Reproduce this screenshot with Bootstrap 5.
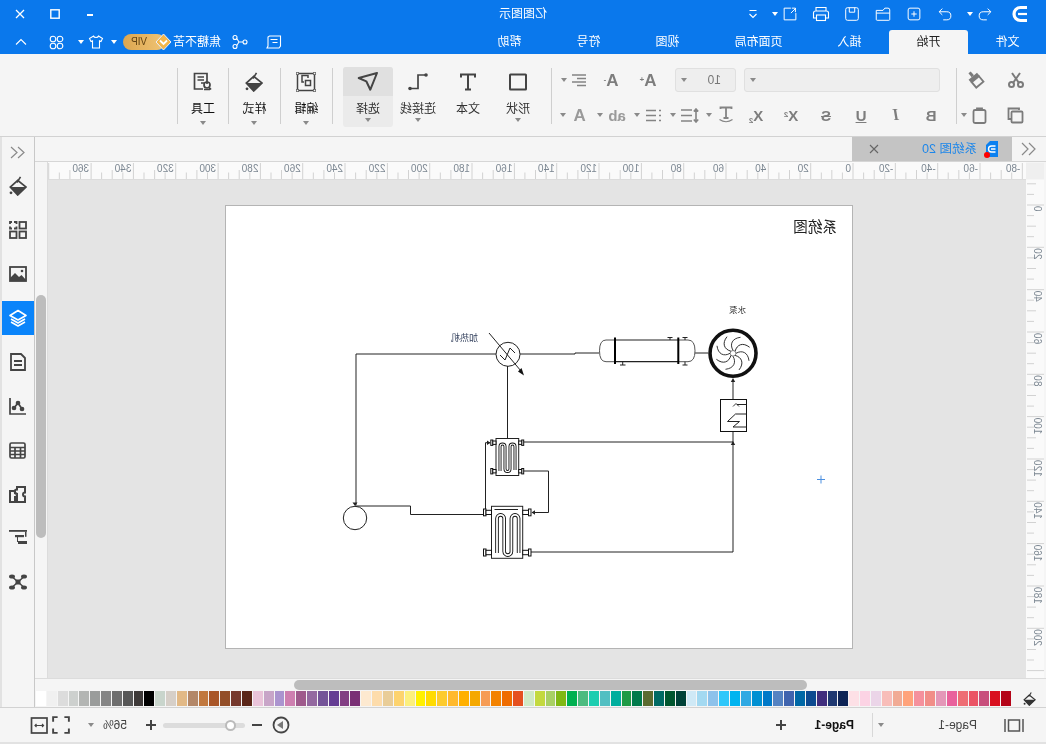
<!DOCTYPE html>
<html lang="zh">
<head>
<meta charset="UTF-8">
<title>亿图图示</title>
<link href="https://cdn.jsdelivr.net/npm/bootstrap@5.3.3/dist/css/bootstrap.min.css" rel="stylesheet">
<style>
html, body { width: 1046px; height: 744px; margin: 0; overflow: hidden; background: #f5f5f5; }
body { font-family: "Liberation Sans", "Noto Sans CJK SC", sans-serif; font-size: 12px; color: #333; }
/* the whole window is shown mirrored */
.app-flip { width: 1046px; height: 744px; transform: scaleX(-1); }
svg { display: block; }
.ln { fill: none; stroke: currentColor; stroke-width: 1.1; }
.cell { display: flex; align-items: center; justify-content: center; flex: none; }
.cr { flex: none; width: 0; height: 0; border-left: 3.5px solid transparent; border-right: 3.5px solid transparent; border-top: 4px solid #8a8a8a; }
.crw { width: 8px; display: flex; justify-content: center; flex: none; }

.m1 { margin-left: 1px; } .m2 { margin-left: 2px; } .m3 { margin-left: 3px; } .m4 { margin-left: 4px; } .m5 { margin-left: 5px; }
.m8 { margin-left: 8px; } .m9 { margin-left: 9px; } .m10 { margin-left: 10px; } .m12 { margin-left: 12px; } .m16 { margin-left: 16px; } .m17 { margin-left: 17px; } .m18 { margin-left: 18px; }
.m26 { margin-left: 26px; } .m27 { margin-left: 27px; } .m53 { margin-left: 53px; }

/* title + tabs */
.top-blue { background: #0a78ec; color: #fff; flex: none; }
.title-row { height: 27px; display: grid; grid-template-columns: 1fr auto 1fr; align-items: center; }
.title-row .cell { height: 27px; }
.w31 { width: 31px; } .w25 { width: 25px; } .w35 { width: 35px; } .w33 { width: 33px; } .w20 { width: 20px; } .w40 { width: 40px; } .w32 { width: 32px; } .w34 { width: 34px; } .w30 { width: 30px; } .w24 { width: 24px; }
.tb-caret { width: 9px; margin-left: -5px; margin-right: 5px; display: flex; justify-content: center; }
.cr.wh { border-top-color: #fff; }
.logo-cell { margin-left: 10px; margin-right: 4px; }
.win-btns { padding-right: 3px; }
.tab-row { height: 27px; padding-top: 3px; }
.rb-tab { padding: 0 27.5px; line-height: 24px; height: 24px; color: #fff; flex: none; }
.rb-tab.on { background: #f5f5f5; color: #222; border-radius: 3px 3px 0 0; }
.rb-tab:first-child { margin-left: -1px; }
.tab-tools { padding-right: 11px; }
.vip-pill { position: relative; width: 42px; height: 16px; margin-left: 8px; border-radius: 8px; background: linear-gradient(90deg, #f0c474, #dca650); color: #644413; font-size: 10px; line-height: 16px; text-align: right; padding-right: 8px; flex: none; }
.vip-gem { position: absolute; left: -7px; top: -1px; }
.user-name { width: 48px; flex: none; white-space: nowrap; }

/* ribbon */
.ribbon { height: 83px; background: #f5f5f5; border-bottom: 1px solid #d2d2d2; flex: none; }
.rsep { width: 1px; height: 56px; margin-top: 14px; background: #cfcfcf; flex: none; }
.clip-grp { width: 89px; padding: 14px 0 0 10px; color: #7b7b7b; flex: none; }
.font-grp { width: 404px; padding-top: 14px; color: #848484; flex: none; }
.rrow { height: 24px; display: flex; align-items: center; }
.rrow + .rrow { margin-top: 11px; }
.rrow .cell { height: 24px; }
.font-row2 { padding-left: 7.5px; }
.sel-box { height: 24px; background: #eee; border: 1px solid #e0e0e0; border-radius: 3px; display: flex; align-items: center; justify-content: flex-end; padding-right: 5px; flex: none; }
.sel-name { width: 196px; margin-left: 16px; }
.sel-size { width: 61px; margin-left: 8px; justify-content: space-between; padding-left: 14px; color: #777; }
.gl { font-weight: 700; font-size: 15px; line-height: 1; color: #7d7d7d; }
.gl-big { font-size: 17px; }
.gl-serif { font-family: "Liberation Serif", serif; font-style: italic; font-size: 16px; }
.gl-dim { color: #9a9a9a; }
.gl sup, .gl sub { font-size: 8px; }
.caret-tuck { margin-left: -3px; }
.caret-back { margin-left: -4px; }
.big-btn { width: 50px; height: 60px; margin-top: 13px; border-radius: 3px; display: flex; flex-direction: column; align-items: center; flex: none; color: #444; overflow: hidden; }
.big-btn.w51 { width: 51px; }
.big-ic { height: 29px; width: 100%; display: flex; align-items: center; justify-content: center; flex: none; }
.big-lb { line-height: 18px; margin-top: 4px; height: 18px; color: #333; white-space: nowrap; flex: none; }
.big-btn.on { background: #ebebeb; }
.big-btn.on .big-ic { background: #e0e0e0; }
.big-btn.tool .big-lb { height: 21px; color: #111; }

/* main */
.main-row { height: 570px; flex: none; }
.work { width: 1011px; flex: none; }
.tab-strip { height: 25px; background: #f5f5f5; border-bottom: 1px solid #d6d6d6; padding-left: 10px; flex: none; }
.doc-tab { width: 160px; height: 24px; background: #c4c4c4; margin-left: 8px; position: relative; flex: none; }
.doc-tab .nm { color: #1c86ea; font-size: 12.5px; margin-left: 9px; white-space: nowrap; }
.doc-close { margin-left: auto; margin-right: 17px; color: #666; }
.doc-dot { position: absolute; left: 22px; top: 15px; width: 6px; height: 6px; border-radius: 50%; background: #f00; }
.mid-row { height: 516px; flex: none; }
.mid-col { width: 998px; flex: none; }
.ruler-row { height: 18px; flex: none; }
.ruler-cnr { width: 20px; padding: 1px 0 1px 2px; flex: none; }
.ruler-cnr div { height: 16px; background: #efefef; }
.hruler { width: 978px; height: 18px; padding-top: 1px; background: #fafafa; flex: none; border-bottom: 1px solid #dcdcdc; }
.ruler-txt { font-family: "Liberation Sans", sans-serif; font-size: 10px; fill: #7c8792; }
.canvas-row { height: 498px; flex: none; }
.vruler { width: 18px; margin-left: 2px; background: #fafafa; flex: none; }
.canvas-area { width: 978px; background: #e4e4e4; padding: 25px 0 0 173px; flex: none; }
.dg-page { width: 628px; height: 444px; background: #fff; border: 1px solid #b4b4b4; }
.hbar { height: 12px; background: #f5f5f5; border-top: 1px solid #dcdcdc; padding: 1px 0 0 239px; flex: none; }
.hbar div { width: 513px; height: 10px; border-radius: 5px; background: #bdbdbd; }
.swatch-row { height: 17px; padding-top: 1px; background: #f5f5f5; flex: none; position: relative; }
.swatch { width: 10.85px; height: 15px; flex: none; border-right: 1px solid #f5f5f5; }
.pal-ic { position: absolute; left: 10px; top: 2px; color: #333; }
.vscroll-col { width: 13px; flex: none; background: #f5f5f5; border-left: 1px solid #dcdcdc; padding: 133px 1px 0 1px; }
.vscroll-col div { height: 243px; border-radius: 5px; background: #bdbdbd; }
.side-bar { width: 33px; border-left: 1px solid #c8c8c8; background: #f5f5f5; flex: none; color: #444; }
.side-top { height: 30px; color: #8a8a8a; }
.side-it { height: 44px; display: flex; align-items: center; justify-content: center; }
.side-it.first { margin-top: -3px; }
.side-it.on { background: #0a84fa; color: #fff; height: 34px; margin: 5px 0; }
.edge-l { width: 2px; background: #e2e2e2; flex: none; }

/* status */
.status { height: 35px; flex: none; background: #f5f5f5; border-top: 1px solid #d2d2d2; padding-left: 22px; padding-right: 30px; color: #444; }
.pg-sep { width: 1px; height: 24px; background: #d8d8d8; margin-left: 4px; flex: none; }
.pg-nm { width: 39px; white-space: nowrap; flex: none; }
.pg-bold { width: 40px; font-weight: 700; color: #111; white-space: nowrap; flex: none; }
.zoom-track { position: relative; width: 82px; height: 5px; margin-left: 5px; background: #dcdcdc; border-radius: 3px; flex: none; }
.zoom-knob { position: absolute; left: 9px; top: -3px; width: 11px; height: 11px; border-radius: 50%; background: #fff; border: 2px solid #bbb; }
.bottom-edge { height: 2px; background: #e2e2e2; flex: none; }
</style>
</head>
<body>

<svg class="d-none">
  <symbol id="ic-bucket" viewBox="0 0 18 20">
    <path d="M9.3 4.3 16.7 11 9.3 19 1 11Z" fill="none" stroke="currentColor" stroke-width="1.7"/>
    <path d="M1 11H16.7L9.3 19Z" fill="currentColor"/>
    <path d="M6.5 .8 10 6.5" stroke="currentColor" stroke-width="1.6"/>
    <circle cx="16" cy="16.8" r="1.4" fill="currentColor"/>
  </symbol>
  <path id="blade" d="M0 -3C-3.5 -9 -1 -15 7.5 -16" fill="none" stroke="#222" stroke-width=".9"/>
</svg>

<div class="app-flip d-flex flex-column">

  <div class="top-blue">
    <div class="title-row">
      <div class="d-flex align-items-center">
        <div class="cell w31 logo-cell">
          <svg width="20" height="20" viewBox="0 0 20 20"><path d="M3 3.5H9.5A6.5 6.5 0 0 1 9.5 16.5H3" fill="none" stroke="#fff" stroke-width="3.2"/><path d="M3 10H12" stroke="#fff" stroke-width="2.2"/></svg>
        </div>
        <div class="cell w31"><svg width="18" height="18" viewBox="0 0 20 20" class="ln"><path d="M7 4 3.500 7.500 7 11M3.500 7.500H12a4.500 4.500 0 0 1 0 9H8"/></svg></div>
        <div class="tb-caret"><span class="cr wh"></span></div>
        <div class="cell w31"><svg width="18" height="18" viewBox="0 0 20 20" class="ln"><path d="M13 4 16.500 7.500 13 11M16.500 7.500H8a4.500 4.500 0 0 0 0 9H12"/></svg></div>
        <div class="cell w31"><svg width="18" height="18" viewBox="0 0 20 20" class="ln"><rect x="3.500" y="3.500" width="13" height="13" rx="2"/><path d="M10 7v6M7 10h6"/></svg></div>
        <div class="cell w31"><svg width="18" height="18" viewBox="0 0 20 20" class="ln"><path d="M2.500 16V5.500q0-2 2-2h3.500L10 6h7.500v10q0 1-1 1H3.500q-1 0-1-1ZM2.500 9H17.500"/></svg></div>
        <div class="cell w31"><svg width="18" height="18" viewBox="0 0 20 20" class="ln"><rect x="3" y="3" width="14" height="14" rx="2"/><path d="M7 3v5h6V3"/></svg></div>
        <div class="cell w31"><svg width="20" height="20" viewBox="0 0 20 20" class="ln"><path d="M5 7V3.500H15V7M5 14H2.500V9q0-2 2-2h11q2 0 2 2v5H15"/><rect x="5.500" y="11" width="9" height="5.500"/></svg></div>
        <div class="cell w31"><svg width="18" height="18" viewBox="0 0 20 20" class="ln"><path d="M9 3.500H16.500V16.500H3.500V9M3.500 3.500 9 9M4 8V3.500H8"/></svg></div>
        <div class="tb-caret"><span class="cr wh"></span></div>
        <div class="cell w25"><svg width="12" height="12" viewBox="0 0 12 12" class="ln"><path d="M2.500 2.500h7M2.500 6 6 9.500 9.500 6"/></svg></div>
      </div>
      <div class="text-center">亿图图示</div>
      <div class="d-flex justify-content-end win-btns">
        <div class="cell w35"><svg width="10" height="10" viewBox="0 0 10 10"><path d="M2 6h6" stroke="#fff" stroke-width="2"/></svg></div>
        <div class="cell w35"><svg width="10" height="10" viewBox="0 0 10 10"><rect x=".8" y=".8" width="8.400" height="8.400" fill="none" stroke="#fff" stroke-width="1.400"/></svg></div>
        <div class="cell w35"><svg width="10" height="10" viewBox="0 0 10 10"><path d="M1 1 9 9M9 1 1 9" stroke="#fff" stroke-width="1.300"/></svg></div>
      </div>
    </div>
    <div class="tab-row d-flex">
      <div class="rb-tab">文件</div>
      <div class="rb-tab on">开始</div>
      <div class="rb-tab">插入</div>
      <div class="rb-tab">页面布局</div>
      <div class="rb-tab">视图</div>
      <div class="rb-tab">符号</div>
      <div class="rb-tab">帮助</div>
      <div class="ms-auto d-flex align-items-center tab-tools">
        <div class="cell w35"><svg width="16" height="16" viewBox="0 0 16 16" class="ln"><path d="M1.500 2h11l1.500 1v9l1 2H3l-1.500-2ZM4.500 5.500h7M4.500 8.500h5"/></svg></div>
        <div class="cell w33"><svg width="16" height="16" viewBox="0 0 16 16" class="ln"><circle cx="3" cy="8" r="2"/><circle cx="13" cy="3.500" r="2"/><circle cx="13" cy="12.500" r="2"/><path d="M5 8h4L11.300 4.500M9 8l2.300 3.500"/></svg></div>
        <div class="user-name m3">焦糖不苦</div>
        <div class="vip-pill">VIP
          <svg class="vip-gem" width="17" height="18" viewBox="0 0 17 18"><path d="M8.500 1 16 9 8.500 17 1 9Z" fill="#f4b64a" stroke="#e8efff" stroke-width="1"/><path d="M5 7.500 8.500 11 12 7.500" fill="none" stroke="#fff" stroke-width="1.800"/></svg>
        </div>
        <div class="crw m5"><span class="cr wh"></span></div>
        <div class="cell m4 w20"><svg width="16" height="16" viewBox="0 0 16 16" class="ln"><path d="M5.500 2 1.500 4.500 3 7.500l1.500-.7V14h7V6.800l1.500.7 1.500-3L10.500 2C10 4 6 4 5.500 2Z"/></svg></div>
        <div class="crw m1"><span class="cr wh"></span></div>
        <div class="cell m10 w20"><svg width="15" height="15" viewBox="0 0 15 15" class="ln"><circle cx="4" cy="4" r="2.800"/><circle cx="11" cy="4" r="2.800"/><circle cx="4" cy="11" r="2.800"/><circle cx="11" cy="11" r="2.800"/></svg></div>
        <div class="cell m16 w20"><svg width="14" height="14" viewBox="0 0 14 14" class="ln"><path d="M2 9.500 7 4.500 12 9.500"/></svg></div>
      </div>
    </div>
  </div>

  <div class="ribbon d-flex">
    <div class="clip-grp">
      <div class="rrow">
        <div class="cell w40"><svg width="18" height="18" viewBox="0 0 18 18" fill="none" stroke="currentColor" stroke-width="2"><circle cx="4.500" cy="13.500" r="2.500"/><circle cx="13.500" cy="13.500" r="2.500"/><path d="M6 12 13 2M12 12 5 2"/></svg></div>
        <div class="cell w40"><svg width="18" height="18" viewBox="0 0 18 18"><g transform="rotate(40 9 9)"><rect x="7.500" y="-1" width="3" height="5" fill="currentColor"/><rect x="3.500" y="4" width="11" height="4" fill="currentColor"/><rect x="4.300" y="8" width="9.400" height="7" fill="none" stroke="currentColor" stroke-width="1.800"/></g></svg></div>
      </div>
      <div class="rrow">
        <div class="cell w40"><svg width="17" height="17" viewBox="0 0 17 17" fill="none" stroke="currentColor" stroke-width="1.800"><path d="M5 3V1.500H15.500V12H13"/><rect x="1.500" y="4.500" width="11" height="11" rx="1"/></svg></div>
        <div class="cell w32"><svg width="17" height="17" viewBox="0 0 17 17" fill="none" stroke="currentColor" stroke-width="1.800"><rect x="2.500" y="3" width="12" height="13" rx="1.500"/><path d="M6 3V1.500h5V3" fill="currentColor"/></svg></div>
        <span class="cr caret-tuck"></span>
      </div>
    </div>
    <div class="rsep"></div>
    <div class="font-grp">
      <div class="rrow">
        <div class="sel-box sel-name"><span class="cr"></span></div>
        <div class="sel-box sel-size"><span>10</span><span class="cr"></span></div>
        <div class="cell m10 w34"><span class="gl gl-big">A<sup>+</sup></span></div>
        <div class="cell m3 w34"><span class="gl gl-big">A<sup>-</sup></span></div>
        <div class="cell w30"><svg width="16" height="14" viewBox="0 0 16 14" stroke="currentColor" stroke-width="1.600"><path d="M1 2h14M1 5.500h9M1 9h14M1 12.500h9"/></svg></div>
        <div class="crw caret-back"><span class="cr"></span></div>
      </div>
      <div class="rrow font-row2">
        <div class="cell w35"><span class="gl">B</span></div>
        <div class="cell w35"><span class="gl gl-serif">I</span></div>
        <div class="cell w35"><span class="gl text-decoration-underline">U</span></div>
        <div class="cell w35"><span class="gl text-decoration-line-through">S</span></div>
        <div class="cell w35"><span class="gl">X<sup>2</sup></span></div>
        <div class="cell w35"><span class="gl">X<sub>2</sub></span></div>
        <div class="cell w25"><svg width="16" height="18" viewBox="0 0 16 18" fill="none" stroke="currentColor" stroke-width="1.800"><path d="M2.500 3V1.500h11V3M8 1.500V12M5.500 12h5"/><path d="M1.500 13.500Q8 18 14.500 13.500" stroke-width="1.200"/></svg></div>
        <div class="crw"><span class="cr"></span></div>
        <div class="cell m4 w24"><svg width="19" height="15" viewBox="0 0 19 15" fill="none" stroke="currentColor" stroke-width="1.600"><path d="M3 1V14M.8 3.500 3 1 5.200 3.500M.8 11.500 3 14 5.200 11.500M7 2H18M7 7.500H18M7 13H18"/></svg></div>
        <div class="crw"><span class="cr"></span></div>
        <div class="cell m4 w24"><svg width="15" height="13" viewBox="0 0 15 13" stroke="currentColor" stroke-width="1.600"><path d="M0 1.500h2M0 6.500h2M0 11.500h2M5 1.500h10M5 6.500h10M5 11.500h10"/></svg></div>
        <div class="crw"><span class="cr"></span></div>
        <div class="cell m4 w25"><span class="gl gl-dim">ab</span></div>
        <div class="crw"><span class="cr"></span></div>
        <div class="cell m5 w24"><span class="gl gl-big gl-dim">A</span></div>
        <div class="crw"><span class="cr"></span></div>
      </div>
    </div>
    <div class="rsep"></div>

    <div class="big-btn m8">
      <div class="big-ic"><svg width="20" height="20" viewBox="0 0 20 20"><rect x="2" y="2.500" width="16" height="15" rx=".5" fill="none" stroke="currentColor" stroke-width="2"/></svg></div>
      <div class="big-lb">形状</div><span class="cr"></span>
    </div>
    <div class="big-btn">
      <div class="big-ic"><svg width="20" height="20" viewBox="0 0 20 20" fill="none" stroke="currentColor" stroke-width="2"><path d="M3 5.500V2.500H17V5.500M10 2.500V17.500M7 17.500H13"/></svg></div>
      <div class="big-lb">文本</div>
    </div>
    <div class="big-btn">
      <div class="big-ic"><svg width="22" height="22" viewBox="0 0 22 22"><path d="M3 4H11V17.500H19" fill="none" stroke="currentColor" stroke-width="1.700"/><circle cx="3" cy="4" r="1.800" fill="currentColor"/><circle cx="19" cy="17.500" r="1.800" fill="currentColor"/></svg></div>
      <div class="big-lb">连接线</div><span class="cr"></span>
    </div>
    <div class="big-btn on">
      <div class="big-ic"><svg width="24" height="24" viewBox="0 0 24 24"><path d="M3 3 21.300 8 13.700 11.300 9.700 19.700Z" fill="none" stroke="currentColor" stroke-width="2" stroke-linejoin="round"/></svg></div>
      <div class="big-lb">选择</div><span class="cr"></span>
    </div>
    <div class="rsep m10"></div>
    <div class="big-btn w51 tool">
      <div class="big-ic"><svg width="20" height="20" viewBox="0 0 20 20" fill="none" stroke="currentColor" stroke-width="1.500"><rect x="1.500" y="1.500" width="17" height="17"/><rect x="5.500" y="8.500" width="5" height="5"/><path d="M8 6V3.500H14V10H12"/><g fill="#f5f5f5" stroke-width="1"><circle cx="1.500" cy="1.500" r="1.300"/><circle cx="18.500" cy="1.500" r="1.300"/><circle cx="1.500" cy="18.500" r="1.300"/><circle cx="18.500" cy="18.500" r="1.300"/></g></svg></div>
      <div class="big-lb">编辑</div><span class="cr"></span>
    </div>
    <div class="rsep"></div>
    <div class="big-btn w51 tool">
      <div class="big-ic"><svg width="18" height="20"><use href="#ic-bucket"/></svg></div>
      <div class="big-lb">样式</div><span class="cr"></span>
    </div>
    <div class="rsep"></div>
    <div class="big-btn tool">
      <div class="big-ic"><svg width="19" height="19" viewBox="0 0 19 19" fill="none" stroke="currentColor" stroke-width="1.700"><path d="M5 12V1.500H17.500V17H9"/><path d="M8 5H14.500M8 8H14.500M8 11H11"/><circle cx="5" cy="13" r="3"/><path d="M2.800 15.500 1 17.500M2 17.500H8"/></svg></div>
      <div class="big-lb">工具</div><span class="cr"></span>
    </div>
    <div class="rsep"></div>
  </div>

  <div class="main-row d-flex">
    <div class="work d-flex flex-column">
      <div class="tab-strip d-flex">
        <svg class="align-self-center" width="16" height="14" viewBox="0 0 16 14" fill="none" stroke="#8a8a8a" stroke-width="1.200"><path d="M7 1 1 7l6 6M14 1 8 7l6 6"/></svg>
        <div class="doc-tab d-flex align-items-center">
          <svg class="m12" width="14" height="16" viewBox="0 0 14 16"><path d="M2 0H10L14 4V16H2Z" fill="#0b80f0"/><path d="M4.500 5H8.500A3 3 0 0 1 8.500 11H4.500M4.500 8H9" fill="none" stroke="#fff" stroke-width="1.400"/></svg>
          <span class="doc-dot"></span>
          <span class="nm">系统图 20</span>
          <svg class="doc-close" width="10" height="10" viewBox="0 0 10 10"><path d="M1 1 9 9M9 1 1 9" stroke="currentColor" stroke-width="1.100"/></svg>
        </div>
      </div>
      <div class="mid-row d-flex">
        <div class="mid-col">
          <div class="ruler-row d-flex">
            <div class="ruler-cnr"><div></div></div>
            <div class="hruler" id="hruler"></div>
          </div>
          <div class="canvas-row d-flex">
            <div class="vruler" id="vruler"></div>
            <div class="canvas-area">
              <div class="dg-page">
                <svg width="626" height="442" viewBox="194 206 626 442">
                  <g transform="matrix(-1 0 0 1 1046 0)" fill="none" stroke="#222" stroke-width="1">
                    <path d="M496 354H356V505"/>
                    <path d="M520 354H575V353H599"/>
                    <path d="M507.500 366V438"/>
                    <path d="M695 353H708"/>
                    <path d="M733 380V399M733 432V552H531"/>
                    <path d="M523 442H733"/>
                    <path d="M355 506H410.500V514.500H483"/>
                    <path d="M485.500 512V442.700H490"/>
                    <path d="M523.500 471H548.500V512.500H532"/>
                    <path d="M355 506 352.500 502.500H357.500ZM733 441 730.800 445H735.200ZM733 378 730.800 382H735.200ZM531.500 512.500 535 510.300V514.700ZM490.500 442.700 487 440.500V444.900Z" fill="#222" stroke="none"/>
                    <circle cx="355" cy="518" r="11.700"/>

                    <circle cx="508" cy="354.300" r="12"/>
                    <path d="M489 333 521 371"/>
                    <path d="M524 375.500 518 371.500 521.500 368Z" fill="#111" stroke="none"/>
                    <path d="M500 355 505 360 510 348 515 353"/>

                    <path d="M615 340H678M615 361.700H678" stroke-width="1.200"/>
                    <path d="M615 340H606Q599.500 340 599.500 350.800Q599.500 361.700 606 361.700H615M678 340H688Q695 340 695 350.800Q695 361.700 688 361.700H678" stroke="#555"/>
                    <path d="M615 337.500V364M678.300 337.500V364" stroke="#000" stroke-width="2"/>
                    <path d="M670 340V337.500M667.500 337.500H672.500M685 340V337.500M682.500 337.500H687.500M622.700 361.700V365M620 365H625.500M685 361.700V365M682.500 365H687.500"/>

                    <circle cx="733" cy="353.300" r="23" stroke="#111" stroke-width="3.600"/>
                    <circle cx="733" cy="353.300" r="2.800" stroke="#666" stroke-width=".8"/>
                    <use href="#blade" transform="translate(733 353.300)"/>
                    <use href="#blade" transform="translate(733 353.300) rotate(45)"/>
                    <use href="#blade" transform="translate(733 353.300) rotate(90)"/>
                    <use href="#blade" transform="translate(733 353.300) rotate(135)"/>
                    <use href="#blade" transform="translate(733 353.300) rotate(180)"/>
                    <use href="#blade" transform="translate(733 353.300) rotate(225)"/>
                    <use href="#blade" transform="translate(733 353.300) rotate(270)"/>
                    <use href="#blade" transform="translate(733 353.300) rotate(315)"/>

                    <rect x="720.500" y="399.500" width="26" height="32" stroke="#111"/>
                    <path d="M746.500 404.500H737M746.500 414H735.500L727.500 421.500H739.500L733 427H746.500"/>
                    <path d="M733 406.500 736 403.500 739 406.500" stroke-width=".9"/>

                    <rect x="496" y="438.500" width="22.700" height="37" fill="#fff"/>
                    <path d="M500 471V446.500a2.500 2.500 0 0 1 5 0V469a2.500 2.500 0 0 0 5 0V446.500a2.500 2.500 0 0 1 5 0V470" stroke="#111" stroke-width="3"/>
                    <path d="M500 471V446.500a2.500 2.500 0 0 1 5 0V469a2.500 2.500 0 0 0 5 0V446.500a2.500 2.500 0 0 1 5 0V470" stroke="#fff" stroke-width="1.200"/>
                    <g fill="#fff" stroke="#111">
                      <rect x="490.800" y="440" width="2" height="5.400"/><rect x="492.800" y="441" width="3.200" height="3.400"/>
                      <rect x="490.800" y="468.500" width="2" height="5.400"/><rect x="492.800" y="469.500" width="3.200" height="3.400"/>
                      <rect x="521.700" y="440" width="2" height="5.400"/><rect x="518.700" y="441" width="3" height="3.400"/>
                      <rect x="521.700" y="468.500" width="2" height="5.400"/><rect x="518.700" y="469.500" width="3" height="3.400"/>
                    </g>

                    <rect x="491.500" y="506.300" width="31.200" height="52" fill="#fff"/>
                    <path d="M497 553V518.500a3.600 3.600 0 0 1 7.200 0V551.500a3.600 3.600 0 0 0 7.200 0V518.500a3.600 3.600 0 0 1 7.200 0V553" stroke="#111" stroke-width="3.600"/>
                    <path d="M497 553V518.500a3.600 3.600 0 0 1 7.200 0V551.500a3.600 3.600 0 0 0 7.200 0V518.500a3.600 3.600 0 0 1 7.200 0V553" stroke="#fff" stroke-width="1.800"/>
                    <path d="M494.500 509.500H518"/>
                    <g fill="#fff" stroke="#111">
                      <rect x="483.500" y="509" width="2.500" height="6.800"/><rect x="486" y="510.300" width="5.500" height="4.200"/>
                      <rect x="483.500" y="549" width="2.500" height="7"/><rect x="486" y="550.300" width="5.500" height="4.400"/>
                      <rect x="528.500" y="509" width="2.500" height="6.800"/><rect x="522.700" y="510.300" width="5.800" height="4.200"/>
                      <rect x="528.500" y="549" width="2.500" height="7"/><rect x="522.700" y="550.300" width="5.800" height="4.400"/>
                    </g>
                    <path d="M821 475.500V483.500M817 479.500H825" stroke="#4b8fe0"/>
                  </g>
                  <text x="209" y="232" font-size="14.600" fill="#222" font-family="'Noto Sans CJK SC',sans-serif">系统图</text>
                  <text x="568" y="341" font-size="9" fill="#35425e" font-family="'Noto Sans CJK SC',sans-serif">加热机</text>
                  <text x="300" y="313" font-size="8.500" fill="#333" font-family="'Noto Sans CJK SC',sans-serif">水泵</text>
                </svg>
              </div>
            </div>
          </div>
        </div>
        <div class="vscroll-col"><div></div></div>
      </div>
      <div class="hbar"><div></div></div>
      <div class="swatch-row d-flex flex-row-reverse" id="palette">
        <svg class="pal-ic" width="13" height="14"><use href="#ic-bucket"/></svg>
      </div>
    </div>
    <div class="side-bar">
      <div class="side-top cell"><svg width="15" height="13" viewBox="0 0 15 13" fill="none" stroke="currentColor" stroke-width="1.200"><path d="M7 1 1 6.500 7 12M14 1 8 6.500 14 12"/></svg></div>
      <div class="side-it first"><svg width="18" height="20"><use href="#ic-bucket"/></svg></div>
      <div class="side-it"><svg width="18" height="18" viewBox="0 0 18 18" fill="none" stroke="currentColor" stroke-width="1.800"><rect x="1" y="10.500" width="6.500" height="6.500"/><rect x="10.500" y="10.500" width="6.500" height="6.500"/><rect x="1" y="1" width="6.500" height="6.500"/><path d="M10.500 3V1H13M15 1H17V3M17 5.500V7.500H15M13 7.500H10.500V5.500"/></svg></div>
      <div class="side-it"><svg width="18" height="16" viewBox="0 0 18 16"><rect x="1" y="1" width="16" height="14" fill="none" stroke="currentColor" stroke-width="1.800"/><circle cx="5" cy="5" r="1.300" fill="currentColor"/><path d="M1 14 5.500 9 8 11 12 7 17 12V15H1Z" fill="currentColor"/></svg></div>
      <div class="side-it on"><svg width="18" height="18" viewBox="0 0 18 18" fill="none" stroke="currentColor" stroke-width="1.600" stroke-linejoin="round"><path d="M9 1.500 17 6.500 9 11 1 6.500Z"/><path d="M2 10 9 14 16 10M2 13 9 17 16 13"/></svg></div>
      <div class="side-it"><svg width="16" height="18" viewBox="0 0 16 18" fill="none" stroke="currentColor" stroke-width="1.800"><path d="M1 5 5 1H15V17H1Z"/><path d="M4 8H12M4 12H12" stroke-width="2"/></svg></div>
      <div class="side-it"><svg width="18" height="18" viewBox="0 0 18 18" stroke="currentColor" stroke-width="1.700" fill="currentColor"><path d="M17 1V17H1" fill="none"/><path d="M5 12 9 6 13 11" fill="none"/><circle cx="5" cy="12" r="1.500"/><circle cx="9" cy="6" r="1.500"/><circle cx="13" cy="11" r="1.500"/></svg></div>
      <div class="side-it"><svg width="17" height="17" viewBox="0 0 17 17" fill="none" stroke="currentColor" stroke-width="1.700"><rect x="1" y="1" width="15" height="15" rx="1.500"/><path d="M1 5.500H16M1 9H16M1 12.500H16M5.500 5.500V16M11 5.500V16"/></svg></div>
      <div class="side-it"><svg width="17" height="17" viewBox="0 0 17 17"><path d="M1 1H9V3.500A2 2 0 0 1 9 8V16H1V10.500A2 2 0 0 0 1 6.500ZM11 5H16V16H11V11A2 2 0 0 1 11 7Z" fill="none" stroke="currentColor" stroke-width="2"/></svg></div>
      <div class="side-it"><svg width="18" height="16" viewBox="0 0 18 16" fill="currentColor"><rect width="18" height="1.800"/><rect x=".5" y="1.800" width="1.500" height="5"/><rect x="3" y="5" width="9" height="2.200"/><rect x="9" y="7" width="1" height="5"/><rect y="11" width="9" height="3"/></svg></div>
      <div class="side-it"><svg width="18" height="16" viewBox="0 0 18 16"><g fill="currentColor"><ellipse cx="3" cy="2.500" rx="3" ry="2"/><ellipse cx="15" cy="2.500" rx="3" ry="2"/><ellipse cx="3" cy="13.500" rx="3" ry="2"/><ellipse cx="15" cy="13.500" rx="3" ry="2"/><rect x="6.500" y="5.500" width="5" height="5"/></g><path d="M4 3.500 14 12.500M14 3.500 4 12.500" stroke="currentColor" stroke-width="1.500"/></svg></div>
    </div>
    <div class="edge-l"></div>
  </div>

  <div class="status d-flex align-items-center">
    <svg width="20" height="13" viewBox="0 0 20 13" fill="none" stroke="#555" stroke-width="1.500"><rect x="4.500" y="1" width="11" height="11"/><path d="M1 0V13M19 0V13"/></svg>
    <div class="pg-nm m27">Page-1</div>
    <div class="crw m53"><span class="cr"></span></div>
    <div class="pg-sep"></div>
    <div class="pg-bold m18">Page-1</div>
    <svg class="m26" width="14" height="14" viewBox="0 0 14 14"><path d="M7 2V12M2 7H12" stroke="#444" stroke-width="2"/></svg>

    <svg class="ms-auto" width="18" height="18" viewBox="0 0 18 18"><circle cx="9" cy="9" r="7.500" fill="none" stroke="#444" stroke-width="1.800"/><path d="M13 9 7 5V13Z" fill="#777"/></svg>
    <svg class="m8" width="14" height="14" viewBox="0 0 14 14"><path d="M2 7H12" stroke="#444" stroke-width="2"/></svg>
    <div class="zoom-track"><div class="zoom-knob"></div></div>
    <svg class="m5" width="14" height="14" viewBox="0 0 14 14"><path d="M7 2V12M2 7H12" stroke="#444" stroke-width="2"/></svg>
    <div class="m17 w24">56%</div>
    <div class="crw m8"><span class="cr"></span></div>
    <svg class="m16" width="20" height="18" viewBox="0 0 16 16" fill="none" stroke="#444" stroke-width="1.700"><path d="M1 5V1H5M11 1H15V5M1 11V15H5M11 15H15V11"/></svg>
    <svg class="m3" width="18" height="17" viewBox="0 0 18 17" fill="none" stroke="#444" stroke-width="1.700"><rect x="1" y="1" width="15.500" height="15"/><path d="M4.500 8.500H13M6 7 4.500 8.500 6 10M11.500 7 13 8.500 11.500 10" stroke-width="1.200"/></svg>
  </div>
  <div class="bottom-edge"></div>
</div>

<script src="https://cdn.jsdelivr.net/npm/bootstrap@5.3.3/dist/js/bootstrap.bundle.min.js"></script>
<script>
  // palette, listed as seen from the bar's far end
  const colores = ['#ffffff','#f0f0f0','#dcdcdc','#cdd0ce','#b3b5b3','#9a9c9b','#858585','#6e6e6e','#575757','#3e3a39','#000000','#c9d5cc','#d6cfc8','#e2b986','#b38768','#c1783e','#a95628','#934e28','#76392d','#5b2618','#eac4da','#c8a5c8','#ab94cf','#ce7fb0','#9f5a8c','#9469a0','#745398','#653d93','#823e83','#7a3075','#fde9d0','#fddcab','#e9cd98','#fdd36e','#fcef7d','#fff000','#ffdb00','#fdcb2e','#ffb92d','#ffb000','#f5a800','#f69c55','#f38200','#ef6c00','#e55020','#d0e9c6','#c3d93f','#a8d064','#80b814','#00b050','#4cbb7f','#1ccdb0','#52bfc2','#00ae9d','#1e9a46','#007a4b','#5b6b30','#006a64','#00562f','#004238','#cfe9f6','#a3d9f1','#8dc2eb','#2ec7fa','#00b4f0','#2fa9e3','#0090d2','#0079c8','#5583c2','#4064ae','#0068a6','#0d4a90','#402d7d','#1f3871','#0e2456','#fde0e6','#fcd3e4','#ebd5e8','#f8bdb9','#f1ab95','#ffa37b','#f5919d','#f18e88','#e497b8','#e9619c','#ee6d74','#eb5365','#c84f7c','#d9101f','#b40418'];
  const paleta = document.getElementById('palette');
  colores.forEach(c => {
    const d = document.createElement('div');
    d.className = 'swatch';
    d.style.background = c;
    paleta.appendChild(d);
  });

  const escala = 42.33 / 20;
  let h = '<svg width="978" height="16" viewBox="20 0 978 16">';
  for (let u = -80; u <= 380; u += 5) {
    const x = (193 + u * escala).toFixed(1);
    const y1 = u % 20 === 0 ? 0 : (u % 10 === 0 ? 7 : 9.5);
    h += `<path d="M${x} ${y1}V16" stroke="#d2d2d2"/>`;
    if (u % 20 === 0 && u < 380) h += `<text class="ruler-txt" x="${+x + 2}" y="9">${u}</text>`;
  }
  document.getElementById('hruler').innerHTML = h + '</svg>';

  let v = '<svg width="18" height="498" viewBox="0 180 18 498">';
  for (let u = -10; u <= 225; u += 5) {
    const y = (205 + u * escala).toFixed(1);
    const x1 = u % 20 === 0 ? 0 : (u % 10 === 0 ? 8 : 10);
    v += `<path d="M${x1} ${y}H17" stroke="#d2d2d2"/>`;
    if (u % 20 === 0 && u < 220) v += `<text class="ruler-txt" transform="translate(10 ${+y + 1}) rotate(-90)" text-anchor="end">${u}</text>`;
  }
  document.getElementById('vruler').innerHTML = v + '</svg>';
</script>
</body>
</html>
